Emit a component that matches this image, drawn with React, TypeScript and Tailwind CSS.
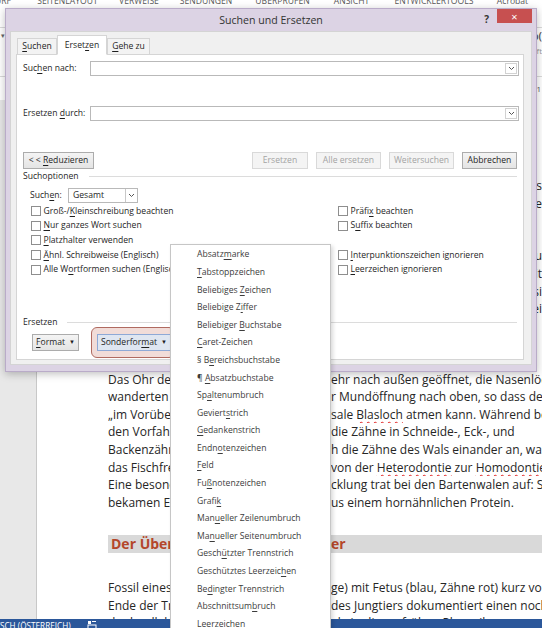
import React from 'react'

// "&" marks the accelerator letter that Windows underlines
function Acc({ text }: { text: string }) {
  const i = text.indexOf('&')
  if (i < 0) return <span>{text}</span>
  return (
    <span>
      {text.slice(0, i)}
      <span className="underline decoration-[0.8px] underline-offset-[1.5px]">{text[i + 1]}</span>
      {text.slice(i + 2)}
    </span>
  )
}

function Wavy({ children }: { children: React.ReactNode }) {
  return <span className="underline decoration-wavy decoration-[#e02020] decoration-[0.8px] underline-offset-[2px]">{children}</span>
}

const MENU = [
  'Absatz&marke',
  '&Tabstoppzeichen',
  'Beliebiges &Zeichen',
  'Beliebige Z&iffer',
  'Beliebiger &Buchstabe',
  '&Caret-Zeichen',
  '§ B&ereichsbuchstabe',
  '¶ &Absatzbuchstabe',
  'Sp&altenumbruch',
  'Geviert&strich',
  '&Gedankenstrich',
  'Endn&otenzeichen',
  '&Feld',
  'Fu&ßnotenzeichen',
  'Grafi&k',
  'Man&ueller Zeilenumbruch',
  'Ma&nueller Seitenumbruch',
  'Gesch&ützter Trennstrich',
  'Geschütztes Leerzeic&hen',
  'Be&dingter Trennstrich',
  'Abschnittsum&bruch',
  'Leerzeichen',
]

const OPTIONS: (string | null)[] = [
  'Groß-/&Kleinschreibung beachten', 'Präfi&x beachten',
  '&Nur ganzes Wort suchen', 'S&uffix beachten',
  '&Platzhalter verwenden', null,
  '&Ähnl. Schreibweise (Englisch)', '&Interpunktionszeichen ignorieren',
  'Alle W&ortformen suchen (Englisch)', '&Leerzeichen ignorieren',
]

// ribbon tabs: label, slot width, gap before
const TABS: [string, string][] = [
  ['ENTWURF', 'w-[54px] ml-[-36px]'],
  ['SEITENLAYOUT', 'w-[61px] ml-[19px]'],
  ['VERWEISE', 'w-[40px] ml-[21px]'],
  ['SENDUNGEN', 'w-[54px] ml-[20px]'],
  ['ÜBERPRÜFEN', 'w-[55px] ml-[22px]'],
  ['ANSICHT', 'w-[37px] ml-[23px]'],
  ['ENTWICKLERTOOLS', 'w-[82px] ml-[23px]'],
  ['Acrobat', 'w-[31px] ml-[22px]'],
]

// lines of the page behind the dialog: only their tail peeks out on the right
const BEHIND = [
  'die heutigen Zahnwale und Bartenwale gehen auf gemeinsame Vorfahren zurück, dies is',
  'wurde durch genetische Untersuchungen der letzten Jahre mehrfach bestätigt, wie e',
  '',
  '',
  'Im Laufe der Evolution wurden die Hinterbeine zurückgebildet, die Vorderbeine zu',
  'Flossen umgewandelt und der Körper immer stromlinienförmiger, sodass sich die Tiere mit',
  'einer kräftigen Schwanzflosse fortbewegen konnten. Der Hals wurde verkürzt, damit si',
  'der Kopf nicht mehr unabhängig vom Rumpf bewegte, die Wirbel verschmolzen teilwei',
  '',
  '',
  '',
]

// each line: [start, continuation] – the continuation begins at the page's second column
const PARA: [string, React.ReactNode][] = [
  ['Das Ohr der Wale wurde dabei immer m', 'ehr nach außen geöffnet, die Nasenlöcher'],
  ['wanderten von der Schnauzenspitze über de', 'r Mundöffnung nach oben, so dass der Wal'],
  ['„im Vorüberschwimmen“ durch das dor', <>sale <Wavy>Blasloch</Wavy> atmen kann. Während bei</>],
  ['den Vorfahren der heutigen Wale noch', 'die Zähne in Schneide-, Eck-, und'],
  ['Backenzähne gegliedert waren, glichen sic', 'h die Zähne des Wals einander an, was'],
  ['das Fischfressen erleichterte – somit weg', <>von der <Wavy>Heterodontie</Wavy> zur <Wavy>Homodontie</Wavy>.</>],
  ['Eine besonders bemerkenswerte Entwi', 'cklung trat bei den Bartenwalen auf: Sie'],
  ['bekamen Ersatz für ihre Zähne: Barten a', 'us einem hornähnlichen Protein.'],
]

const PARA2: [string, string][] = [
  ['Fossil eines Maiacetus (Ausgrabungsla', 'ge) mit Fetus (blau, Zähne rot) kurz vor'],
  ['Ende der Trächtigkeit. Die Lage', 'des Jungtiers dokumentiert einen noch'],
  ['der landlebenden Geburtsvorgang, da W', 'ale in dieser frühen Phase ihrer'],
]

function DocLine({ a, b }: { a: string; b: React.ReactNode }) {
  return (
    <div className="h-[17.6px] grid grid-cols-[223px_1fr]">
      <span className="overflow-hidden">{a}</span>
      <span className="overflow-hidden">{b}</span>
    </div>
  )
}

function Chevron() {
  return (
    <svg width="7" height="5" viewBox="0 0 7 5">
      <path d="M1 1 L3.5 3.5 L6 1" fill="none" stroke="#555" strokeWidth="1" />
    </svg>
  )
}

function Combo() {
  return (
    <div className="flex-1 h-[15px] flex bg-white border border-[#b9b9b9]">
      <div className="flex-1" />
      <div className="w-[12px] my-[1px] mr-[1px] flex items-center justify-center border border-[#d2d2d2]">
        <Chevron />
      </div>
    </div>
  )
}

function Btn({ label, w, disabled }: { label: string; w: string; disabled?: boolean }) {
  return (
    <div
      className={`${w} h-[17px] flex items-center justify-center border ${
        disabled
          ? 'border-[#d9d9d9] bg-[#f4f4f4] text-[#a3a3a3]'
          : 'border-[#acacac] bg-gradient-to-b from-[#f4f4f4] to-[#e4e4e4] text-[#1e1e1e]'
      }`}
    >
      <Acc text={label} />
    </div>
  )
}

function Box() {
  return <div className="w-[10px] h-[10px] shrink-0 border border-[#8e8e8e] bg-white" />
}

export default function App() {
  return (
    <div className="relative w-[542px] h-[628px] overflow-hidden bg-white flex flex-col font-['Open_Sans',sans-serif]">

      {/* ── Word ribbon (mostly hidden by the dialog) ───────────── */}
      <div className="h-[100px] shrink-0 flex flex-col bg-white">
        <div className="h-[8px] overflow-hidden">
          <div className="flex -mt-[5px] text-[8.6px] leading-[12px] text-[#595959] whitespace-nowrap">
            {TABS.map(([t, c]) => (
              <span key={t} className={`${c} shrink-0 flex justify-center`}>{t}</span>
            ))}
          </div>
        </div>
        <div className="h-[20px] border-b border-[#dadada]" />
        <div className="h-[49px] flex flex-col overflow-hidden whitespace-nowrap border-b border-[#dadada]">
          <div className="mt-[1px] h-[14px] flex items-center justify-between">
            <span className="ml-[1px] text-[7px] text-[#666]">▾</span>
            <span className="text-[11px] leading-[14px] font-semibold text-[#555]">AaBbC AaBb(</span>
          </div>
          <span className="self-end mt-[3px] text-[8px] leading-[10px] text-[#9a9a9a]">Überschrift</span>
        </div>
        <div className="h-[23px] flex items-center justify-end pr-[1px] text-[8px] text-[#555]">1</div>
      </div>

      {/* ── Document area ───────────────────────────────────────── */}
      <div className="flex-1 min-h-0 flex">
        <div className="w-[37px] shrink-0 bg-[#e8e8e8] border-r border-[#c8c8c8]" />
        <div className="flex-1 min-w-0 overflow-hidden pl-[71px] pt-[77px] text-[12px] leading-[17.6px] text-[#262626] whitespace-nowrap">
          {BEHIND.map((l, i) => (
            <div key={i} className="h-[17.6px] flex justify-end overflow-hidden">{l}</div>
          ))}
          {PARA.map(([a, b], i) => <DocLine key={i} a={a} b={b} />)}

          <div className="mt-[24px] h-[18px] grid grid-cols-[223px_1fr] items-center bg-[#d9d9d9] text-[14px] font-bold text-[#b4472b]">
            <span className="overflow-hidden pl-[3px]">Der Übergang vom Land ins Wass</span>
            <span>er</span>
          </div>

          <div className="mt-[26px]">
            {PARA2.map(([a, b], i) => <DocLine key={i} a={a} b={b} />)}
          </div>
        </div>
      </div>

      {/* ── Status bar ──────────────────────────────────────────── */}
      <div className="h-[9px] shrink-0 flex items-start gap-[16px] bg-[#2b579a] overflow-hidden text-white text-[8.2px] leading-[12px] whitespace-nowrap">
        <span className="-ml-[21px] mt-[1px]">DEUTSCH (ÖSTERREICH)</span>
        <svg width="10" height="9" viewBox="0 0 10 9" className="mt-[1px]">
          <rect x="1" y="1" width="3" height="3" fill="#fff" />
          <rect x="5" y="1" width="4" height="1" fill="#fff" />
          <rect x="1" y="5" width="8" height="4" fill="none" stroke="#fff" strokeWidth="1" />
        </svg>
      </div>

      {/* ── Dialog "Suchen und Ersetzen" ────────────────────────── */}
      <div className="absolute left-[5px] top-[8px] w-[532px] h-[364px] flex flex-col bg-[#dcd3e4] border border-[#b9abc8] shadow-[0_2px_8px_rgba(0,0,0,0.25)] text-[8.6px] leading-[11px] text-[#1e1e1e]">
        <div className="h-[22px] shrink-0 grid grid-cols-[1fr_auto_1fr] items-start">
          <div />
          <div className="mt-[4px] text-[10.6px] leading-[14px] text-[#333]">Suchen und Ersetzen</div>
          <div className="flex justify-end items-start">
            <span className="mt-[4px] mr-[8px] text-[10px] leading-[12px] font-bold text-[#333]">?</span>
            <div className="w-[35px] h-[14px] mr-[4px] flex items-center justify-center bg-[#c75050] text-white text-[11px] leading-[11px]">×</div>
          </div>
        </div>

        <div className="flex-1 mx-[4px] mb-[6px] flex flex-col bg-[#f0f0f0] border border-[#d4d4d4] pl-[5px] pr-[7px] pt-[3px] pb-[4px]">
          {/* Tabs */}
          <div className="flex items-end ml-[1px] h-[20px] -mb-[1px] relative z-10">
            <div className="w-[40px] h-[17px] flex items-center justify-center bg-[#f3f3f3] border border-[#d5d5d5]">
              <Acc text="&Suchen" />
            </div>
            <div className="w-[50px] h-[20px] flex items-center justify-center bg-white border border-[#d5d5d5] border-b-white">
              <Acc text="Erset&zen" />
            </div>
            <div className="w-[43px] h-[17px] flex items-center justify-center bg-[#f3f3f3] border border-[#d5d5d5]">
              <Acc text="&Gehe zu" />
            </div>
          </div>

          {/* Tab panel */}
          <div className="flex-1 flex flex-col bg-white border border-[#d5d5d5] pl-[6px] pr-[4px]">
            <div className="mt-[6px] h-[15px] flex items-center">
              <span className="w-[67px]"><Acc text="Suc&hen nach:" /></span>
              <Combo />
            </div>
            <div className="mt-[30px] h-[15px] flex items-center">
              <span className="w-[67px]"><Acc text="Ersetzen &durch:" /></span>
              <Combo />
            </div>

            <div className="mt-[31px] flex items-center pr-[2px]">
              <Btn label="< < &Reduzieren" w="w-[71px]" />
              <div className="flex-1" />
              <div className="flex gap-[8px]">
                <Btn label="Ersetzen" w="w-[56px]" disabled />
                <Btn label="Alle ersetzen" w="w-[65px]" disabled />
                <Btn label="Weitersuchen" w="w-[65px]" disabled />
                <Btn label="Abbrechen" w="w-[55px]" />
              </div>
            </div>

            <div className="mt-[2px] h-[11px] flex items-center">
              <span>Suchoptionen</span>
              <div className="flex-1 ml-[10px] mr-[2px] border-t border-[#dcdcdc]" />
            </div>

            <div className="mt-[6px] h-[15px] flex items-center pl-[7px]">
              <span className="w-[38px]"><Acc text="Such&en:" /></span>
              <div className="w-[70px] h-[15px] flex items-center bg-white border border-[#b9b9b9] pl-[4px]">
                <span className="flex-1">Gesamt</span>
                <div className="w-[12px] h-full flex items-center justify-center border-l border-[#c8c8c8]">
                  <Chevron />
                </div>
              </div>
            </div>

            <div className="mt-[1px] grid grid-cols-[307px_1fr] pl-[8px]">
              {OPTIONS.map((o, i) => (
                <div key={i} className="h-[14.6px] flex items-center gap-[2.5px]">
                  {o && (
                    <>
                      <Box />
                      <Acc text={o} />
                    </>
                  )}
                </div>
              ))}
            </div>

            <div className="mt-[41px] h-[10px] flex items-center">
              <span>Ersetzen</span>
              <div className="flex-1 ml-[10px] mr-[2px] border-t border-[#dcdcdc]" />
            </div>

            <div className="-mt-[1px] flex items-center pl-[9px] gap-[12px]">
              <div className="w-[47px] h-[17px] flex items-center justify-center gap-[4px] border border-[#acacac] bg-gradient-to-b from-[#f4f4f4] to-[#e4e4e4]">
                <Acc text="&Format" />
                <span className="text-[6px]">▼</span>
              </div>
              <div className="pl-[5px] pr-[3px] py-[6px] rounded-[6px] border-[1.5px] border-[#b06a60] bg-[#f1dcd8]">
                <div className="w-[74px] h-[17px] flex items-center justify-center gap-[4px] border border-[#8ea9d6] bg-[#dfe6f1]">
                  <Acc text="Sonderfor&mat" />
                  <span className="text-[6px]">▼</span>
                </div>
              </div>
            </div>
          </div>
        </div>
      </div>

      {/* ── Sonderformat menu ───────────────────────────────────── */}
      <div className="absolute left-[170px] top-[244px] w-[161px] h-[400px] bg-white border border-[#c6c6c6] shadow-[2px_2px_4px_rgba(0,0,0,0.15)] pt-[1px] text-[8.6px] text-[#3c3c3c] whitespace-nowrap">
        {MENU.map(m => (
          <div key={m} className="h-[17.6px] flex items-center pl-[26px]">
            <Acc text={m} />
          </div>
        ))}
      </div>
    </div>
  )
}
